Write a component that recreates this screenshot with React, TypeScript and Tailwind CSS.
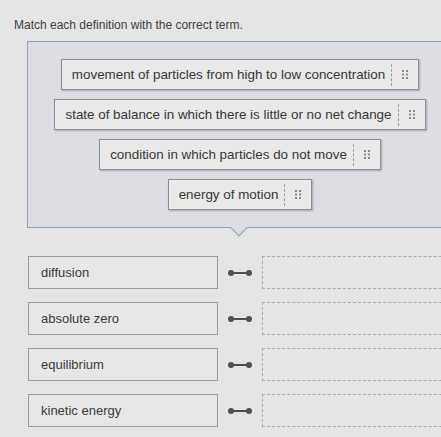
import React from "react";

const chips = [
  "movement of particles from high to low concentration",
  "state of balance in which there is little or no net change",
  "condition in which particles do not move",
  "energy of motion",
];

const terms = ["diffusion", "absolute zero", "equilibrium", "kinetic energy"];

function Grip() {
  return (
    <svg width="6" height="9" viewBox="0 0 6 9" className="block">
      {[0, 1].map((c) =>
        [0, 1, 2].map((r) => (
          <rect key={`${c}-${r}`} x={c * 4} y={r * 3.5} width="2" height="2" fill="#8a8a8a" />
        ))
      )}
    </svg>
  );
}

function Chip({ text }: { text: string }) {
  return (
    <div className="flex h-[31px] items-center border border-[#8f8f8f] bg-[#e9e9e9] shadow-[1px_1px_2px_rgba(0,0,0,0.25)]">
      <span className="pl-[10px] pr-[6px] text-[13.4px] leading-none text-[#363636] whitespace-nowrap">{text}</span>
      <div className="h-[22px] border-l border-dashed border-[#9a9a9a]" />
      <div className="flex w-[26px] items-center justify-center">
        <Grip />
      </div>
    </div>
  );
}

function Row({ term }: { term: string }) {
  return (
    <div className="flex h-[33px] items-center">
      <div className="ml-[28px] flex h-[33px] w-[190px] shrink-0 items-center border border-[#9c9c9c] bg-[#e7e7e7] pl-[12px] text-[13px] text-[#3a3a3a]">
        {term}
      </div>
      <div className="ml-[10px] flex w-[24px] shrink-0 items-center">
        <div className="h-[6px] w-[6px] rounded-full bg-[#4f4f4f]" />
        <div className="h-[2px] flex-1 bg-[#4f4f4f]" />
        <div className="h-[6px] w-[6px] rounded-full bg-[#4f4f4f]" />
      </div>
      <div className="ml-[10px] h-[33px] w-[200px] shrink-0 border border-dashed border-[#a9a9b4] bg-[#e6e6e6]" />
    </div>
  );
}

export default function App() {
  return (
    <div className="h-[437px] w-[441px] overflow-hidden bg-[#e5e5e5] font-['Liberation_Sans',Arial,sans-serif]">
      <p className="pl-[14px] pt-[17px] text-[12px] leading-[16px] text-[#404040]">
        Match each definition with the correct term.
      </p>
      <div className="relative ml-[27px] mt-[8px] flex w-[426px] flex-col items-center gap-[9px] border border-[#8ea2c6] bg-[#dcdee3] pb-[17px] pt-[17px]">
        {chips.map((c) => (
          <Chip key={c} text={c} />
        ))}
        <div className="absolute bottom-[-7px] left-[205px] h-[12px] w-[12px] rotate-45 border-b border-r border-[#8ea2c6] bg-[#dcdee3]" />
      </div>
      <div className="mt-[28px] flex flex-col gap-[13px]">
        {terms.map((t) => (
          <Row key={t} term={t} />
        ))}
      </div>
    </div>
  );
}
